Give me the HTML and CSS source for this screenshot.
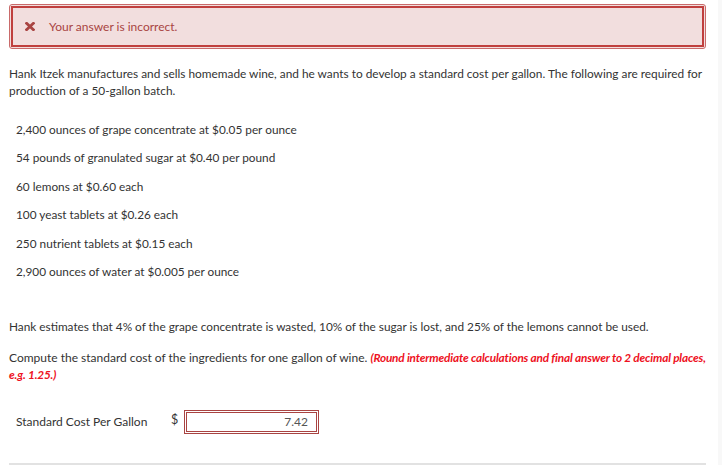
FILE: index.html
```html
<!DOCTYPE html>
<html lang="en">
<head>
<meta charset="utf-8">
<title>Question</title>
<link rel="stylesheet" href="styles.css">
</head>
<body>
<div class="page">
  <main class="content">
    <div class="alert">
      <div class="alert-inner">
        <svg class="alert-icon" width="10" height="9" viewBox="0 0 10 9" aria-hidden="true">
          <path d="M1.6 1.3 L8.4 7.7 M8.4 1.3 L1.6 7.7" stroke="#a94442" stroke-width="2.8" stroke-linecap="square" fill="none"/>
        </svg>
        <span class="alert-text">Your answer is incorrect.</span>
      </div>
    </div>

    <p class="intro">Hank Itzek manufactures and sells homemade wine, and he wants to develop a standard cost per gallon. The following are required for production of a 50-gallon batch.</p>

    <ul class="items">
      <li>2,400 ounces of grape concentrate at $0.05 per ounce</li>
      <li>54 pounds of granulated sugar at $0.40 per pound</li>
      <li>60 lemons at $0.60 each</li>
      <li>100 yeast tablets at $0.26 each</li>
      <li>250 nutrient tablets at $0.15 each</li>
      <li>2,900 ounces of water at $0.005 per ounce</li>
    </ul>

    <p class="estimate">Hank estimates that 4% of the grape concentrate is wasted, 10% of the sugar is lost, and 25% of the lemons cannot be used.</p>

    <p class="compute">Compute the standard cost of the ingredients for one gallon of wine. <em class="hint">(Round intermediate calculations and final answer to 2 decimal places, e.g. 1.25.)</em></p>

    <div class="answer-row">
      <span class="answer-label">Standard Cost Per Gallon</span>
      <span class="currency">$</span>
      <span class="answer-input">7.42</span>
    </div>

    <div class="rule"></div>
  </main>
  <div class="side-strip"></div>
</div>
</body>
</html>
```

FILE: styles.css
```css
* { box-sizing: border-box; }

html, body {
  margin: 0;
  padding: 0;
  background: #ffffff;
}

body {
  font-family: Lato, "Liberation Sans", sans-serif;
  font-size: 12px;
  line-height: 17px;
  color: #333333;
}

.page {
  display: flex;
  width: 722px;
  height: 465px;
  overflow: hidden;
}

.content {
  width: 718px;
  padding: 4px 12px 0 9px;
  display: flex;
  flex-direction: column;
}

.side-strip {
  width: 4px;
  background: #f8f8f8;
}

.alert {
  height: 45px;
  border: 1px solid #c96a6a;
  border-radius: 3px;
  padding: 1px;
  background: #f2dede;
}

.alert-inner {
  height: 100%;
  border: 2px solid #c0403e;
  display: flex;
  align-items: center;
  padding-left: 12px;
  gap: 14px;
}

.alert-icon {
  flex: none;
  margin-top: -1px;
}

.alert-text {
  color: #a94442;
  font-size: 12px;
}

.intro {
  margin: 16px 0 0 0;
  font-size: 11.85px;
}

.items {
  list-style: none;
  margin: 22px 0 0 0;
  padding: 0 0 0 7px;
  display: flex;
  flex-direction: column;
  gap: 11.4px;
  font-size: 11.8px;
}

.estimate {
  margin: 38px 0 0 0;
  font-size: 11.8px;
}

.compute {
  margin: 14px 0 0 0;
  font-size: 12px;
}

.hint {
  color: #ee1122;
  font-weight: bold;
  font-style: italic;
  font-size: 11.8px;
  letter-spacing: -0.18px;
}

.answer-row {
  margin-top: 27px;
  display: flex;
  align-items: center;
  padding-left: 7px;
  font-size: 12px;
}

.answer-label {
  width: 155px;
}

.currency {
  width: 13px;
  margin-top: -4px;
  font-size: 12.5px;
}

.answer-input {
  width: 135px;
  height: 24px;
  border: 3px double #a94442;
  text-align: right;
  padding-right: 8px;
  line-height: 18px;
  color: #555555;
  font-size: 12px;
}

.rule {
  margin-top: 29px;
  height: 2px;
  background: #e2e2e2;
}
```
